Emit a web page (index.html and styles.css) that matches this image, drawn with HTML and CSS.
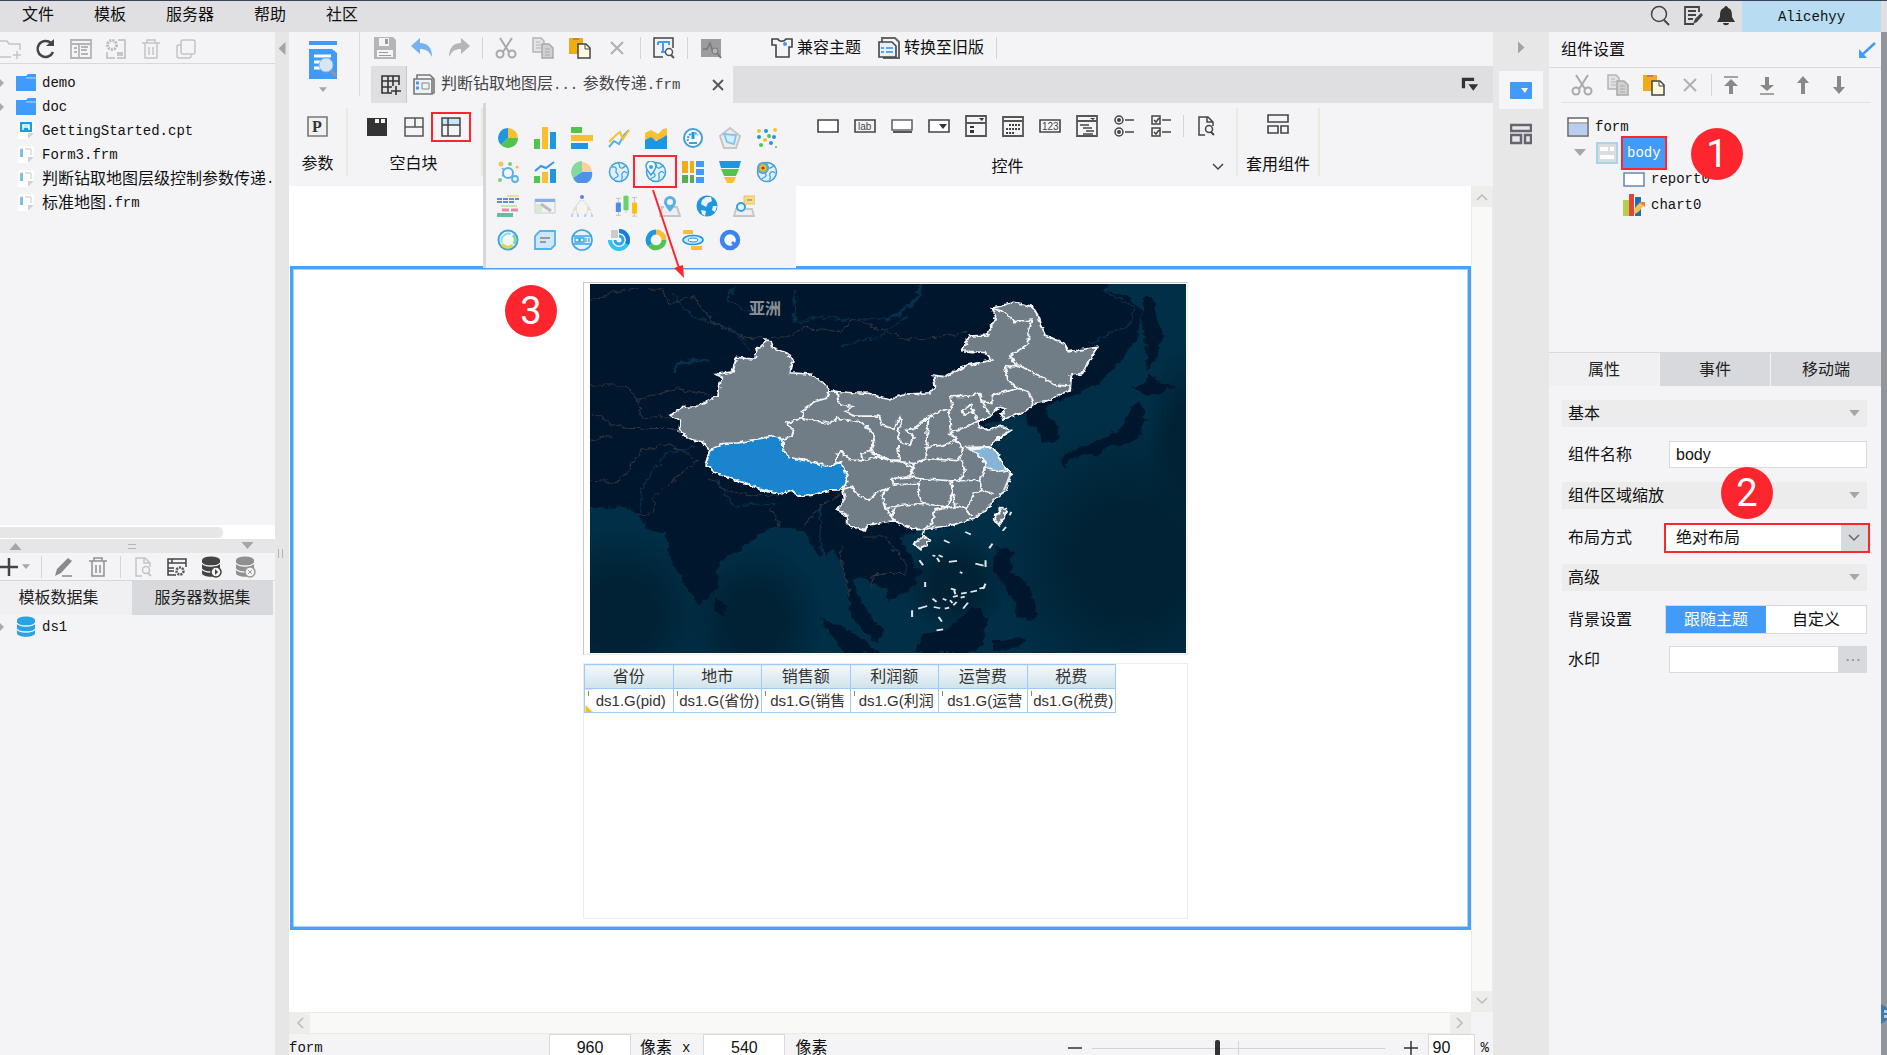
FILE: index.html
```html
<!DOCTYPE html>
<html lang="zh-CN">
<head>
    <meta charset="UTF-8">
    <title>判断钻取地图层级控制参数传递.frm</title>
    <link rel="stylesheet" href="styles.css">
</head>
<body>

<!-- shared icons -->
<svg class="defs" aria-hidden="true">
    <symbol id="i-cut" viewBox="0 0 22 22"><g fill="none" stroke="#a9a9a9" stroke-width="2"><path d="M5 1l9 14M17 1L8 15"/><circle cx="5" cy="17" r="3.500"/><circle cx="17" cy="17" r="3.500"/></g></symbol>
    <symbol id="i-copy" viewBox="0 0 22 22"><path d="M1 1h8l3 3v11H1z" fill="#e4e4e4" stroke="#b4b4b4" stroke-width="1.500"/><path d="M4 5h4M4 8h5M4 11h5" stroke="#b4b4b4"/><path d="M10 7h7l4 4v10H10z" fill="#d0d0d0" stroke="#a8a8a8" stroke-width="1.500"/><path d="M13 12h5M13 15h5M13 18h5" stroke="#aaa"/></symbol>
    <symbol id="i-paste" viewBox="0 0 22 22"><path d="M0 1h14v16H0z" fill="#f0ac14"/><path d="M4 0h6v3H4z" fill="#fff"/><path d="M4 1h6v2H4z" fill="#c9803a"/><path d="M9 7h8l4 4v10H9z" fill="#fff8e0" stroke="#444" stroke-width="1.500"/><path d="M16 7v5h5" fill="none" stroke="#444"/></symbol>
    <symbol id="i-del" viewBox="0 0 22 22"><path d="M5 5l12 12M17 5L5 17" stroke="#b0b0b0" stroke-width="2"/></symbol>
    <symbol id="i-trash" viewBox="0 0 22 22"><path d="M2 5h18M7 5V2h8v3M5 5v15h12V5M9 9v8M13 9v8" fill="none" stroke="currentColor" stroke-width="1.500"/></symbol>
    <symbol id="i-finddoc" viewBox="0 0 22 22"><path d="M10 20H4V2h9l5 5v4M12 2v5h6" fill="none" stroke="currentColor" stroke-width="1.500"/><circle cx="14" cy="14" r="3.500" fill="none" stroke="currentColor" stroke-width="1.500"/><path d="M16 17l3 3" stroke="currentColor" stroke-width="2"/></symbol>
    <symbol id="i-folder" viewBox="0 0 22 18"><path d="M1 2h10l2-2h8v17H1z" fill="#429bf9"/><path d="M11 4h10" stroke="#bcdcff"/></symbol>
    <symbol id="i-frm" viewBox="0 0 18 20"><path d="M1 1h16v11l-5 6H1z" fill="#fff"/><path d="M3 4h3v8H3z" fill="#7cc0ea"/><path d="M8 4h6M14 4v6M3 4h3" stroke="#c5c9d0" fill="none"/><path d="M11 18v-6h6z" fill="#d2d2d4"/></symbol>
    <symbol id="i-db" viewBox="0 0 22 22"><path d="M2 4v13c0 5 18 5 18 0V4z" fill="currentColor"/><ellipse cx="11" cy="4" rx="9" ry="3.500" fill="currentColor"/><path d="M2 7c2 4 16 4 18 0M2 13c2 4 16 4 18 0" stroke="#f4f4f7" stroke-width="1.300" fill="none"/></symbol>
    <symbol id="i-globe" viewBox="0 0 22 22"><circle cx="11" cy="11" r="9.500" fill="#dff0fb" stroke="#3d9fe0" stroke-width="1.500"/><path d="M4 6c4-1 5 2 4 4s3 3 2 5-3 1-4 3M10 2c3 2 0 4 3 5s3-3 6-2M19 12c-3-3-6 0-5 3s-1 3 0 4" fill="none" stroke="#3d9fe0" stroke-width="1.300"/></symbol>
    <symbol id="i-down" viewBox="0 0 12 8"><path d="M0 0h12L6 7z" fill="#a6a6a8"/></symbol>
    <symbol id="i-chev" viewBox="0 0 14 10"><path d="M2 2l5 5 5-5" fill="none" stroke="currentColor" stroke-width="1.500"/></symbol>
</svg>

<div class="app">
    <header class="menubar">
        <nav class="menus">
            <button>文件</button>
            <button>模板</button>
            <button>服务器</button>
            <button>帮助</button>
            <button>社区</button>
        </nav>
        <div class="menu-tools">
            <button aria-label="搜索"><svg viewBox="0 0 22 22"><circle cx="10" cy="9" r="7.500" fill="none" stroke="#444" stroke-width="1.500"/><path d="M15 15l5 5" stroke="#444" stroke-width="2"/></svg></button>
            <button aria-label="反馈"><svg viewBox="0 0 22 22"><path d="M17 7V2H3v17h9M6 6h8M6 10h8M6 14h5" fill="none" stroke="#444" stroke-width="1.800"/><path d="M11 19l2-5 6-6 2 2-6 7z" fill="#444"/></svg></button>
            <button aria-label="消息"><svg viewBox="0 0 22 22"><path d="M11 1c1 0 2 1 2 2 4 1 4 5 4 9l3 5H2l3-5c0-4 0-8 4-9 0-1 1-2 2-2zM8 18h6c0 3-6 3-6 0z" fill="#333"/></svg></button>
        </div>
        <button class="user">Alicehyy</button>
    </header>

    <div class="workspace">
        <aside class="left">
            <div class="toolbar files-bar">
                <button aria-label="新建文件夹"><svg viewBox="0 0 22 22"><path d="M0 3h7l2 3h11v6M0 19h11M17 13v8M13 17h8" fill="none" stroke="#c4c4c4" stroke-width="1.500"/></svg></button>
                <button aria-label="刷新"><svg viewBox="0 0 22 22"><path d="M18 14a8 8 0 1 1-2-9" fill="none" stroke="#444" stroke-width="2.500"/><path d="M11 8h8V1z" fill="#444"/></svg></button>
                <button aria-label="视图"><svg viewBox="0 0 22 22"><path d="M1 2h20v18H1zM1 6h20M9 6v14M4 10h3M4 14h3M11 9h7M11 12h6M11 16h7" fill="none" stroke="#b4b4b4" stroke-width="1.800"/></svg></button>
                <button aria-label="配置"><svg viewBox="0 0 22 22"><path d="M13 2h7v18h-8M2 14v6h8" fill="none" stroke="#bbb" stroke-width="1.500"/><circle cx="7" cy="7" r="4.500" fill="none" stroke="#bbb" stroke-width="3" stroke-dasharray="2 1"/><path d="M12 14h6v4h-6z" fill="#c6c6c6"/></svg></button>
                <button aria-label="删除" class="pale"><svg><use href="#i-trash"/></svg></button>
                <button aria-label="复制"><svg viewBox="0 0 22 22"><rect x="6" y="2" width="14" height="14" rx="2" fill="none" stroke="#c4c4c4" stroke-width="1.500"/><path d="M6 7H3q-1 0-1 1v10q0 2 2 2h10q2 0 2-2v-2" fill="none" stroke="#c4c4c4" stroke-width="1.500"/></svg></button>
            </div>
            <ul class="tree files">
                <li><i class="knob"></i><svg><use href="#i-folder"/></svg><span class="mono">demo</span></li>
                <li><i class="knob"></i><svg><use href="#i-folder"/></svg><span class="mono">doc</span></li>
                <li><i class="stub"></i><svg viewBox="0 0 18 20"><path d="M1 1h16v11l-5 6H1z" fill="#fff"/><path d="M3 1h12v10H3z" fill="#16a0e4"/><path d="M6 9V4h6v5M6 6h6" fill="none" stroke="#fff" stroke-width="1.500"/><path d="M11 18v-6h6z" fill="#d2d2d4"/></svg><span class="mono">GettingStarted.cpt</span></li>
                <li><i class="stub"></i><svg><use href="#i-frm"/></svg><span class="mono">Form3.frm</span></li>
                <li><i class="stub"></i><svg><use href="#i-frm"/></svg>判断钻取地图层级控制参数传递<span class="mono">.frm</span></li>
                <li><i class="stub"></i><svg><use href="#i-frm"/></svg>标准地图<span class="mono">.frm</span></li>
            </ul>
            <div class="hscroll-thin"><span></span></div>
            <div class="splitter-h"><svg class="flip"><use href="#i-down"/></svg><i></i><svg><use href="#i-down"/></svg></div>
            <div class="toolbar data-bar">
                <button class="add" aria-label="新增"><svg viewBox="0 0 22 22"><path d="M9 2v18M0 11h18" stroke="#444" stroke-width="2.500"/></svg><svg class="caret"><use href="#i-down"/></svg></button>
                <i class="sep"></i>
                <button aria-label="编辑"><svg viewBox="0 0 22 22"><path d="M2 20l2-7L15 2l4 3L8 17z" fill="#8a8a8a"/><path d="M9 20h10" stroke="#8a8a8a" stroke-width="1.500"/></svg></button>
                <button aria-label="删除" class="mid"><svg><use href="#i-trash"/></svg></button>
                <i class="sep"></i>
                <button aria-label="预览" class="pale"><svg><use href="#i-finddoc"/></svg></button>
                <button aria-label="存储过程"><svg viewBox="0 0 22 22"><path d="M10 19H2V3h18v8M2 7h18M6 3v4M2 12h6M2 15h6" fill="none" stroke="#444" stroke-width="1.500"/><circle cx="14" cy="15" r="3.500" fill="none" stroke="#555" stroke-width="2.500" stroke-dasharray="2 1"/></svg></button>
                <button aria-label="连接" class="dark"><svg viewBox="0 0 22 22"><use href="#i-db"/><circle cx="16" cy="16" r="5" fill="#f4f4f7" stroke="#444" stroke-width="1.500"/><path d="M15 13l3 3-3 3z" fill="#444"/></svg></button>
                <button aria-label="断开" class="mid"><svg viewBox="0 0 22 22"><use href="#i-db"/><circle cx="16" cy="16" r="5" fill="#f4f4f7" stroke="#999" stroke-width="1.500"/><path d="M14 14l4 4M18 14l-4 4" stroke="#999"/></svg></button>
            </div>
            <div class="tabs data-tabs" role="tablist">
                <button role="tab" aria-selected="true">模板数据集</button>
                <button role="tab" aria-selected="false">服务器数据集</button>
            </div>
            <ul class="tree datasets">
                <li><i class="knob"></i><svg><use href="#i-db"/></svg><span class="mono">ds1</span></li>
            </ul>
        </aside>

        <div class="splitter-v"><i class="tri-left"></i><i class="grip"></i></div>

        <main class="center">
            <div class="top">
                <button class="preview" aria-label="预览">
                    <svg class="preview-icon" viewBox="0 0 30 40"><path d="M1 1h28v4H1zM1 9h23l5 4v26H1z" fill="#3f9af8"/><path d="M6 16h17M6 22h7M6 28h6" stroke="#fff" stroke-width="3"/><circle cx="18" cy="25" r="7" fill="#d7e6f4" stroke="#8fb9e6"/><path d="M23 31l5 5" stroke="#8a97a6" stroke-width="3"/></svg>
                    <svg class="caret"><use href="#i-down"/></svg>
                </button>
                <div class="top-main">
                    <div class="toolbar main-bar">
                        <button aria-label="保存"><svg viewBox="0 0 22 22"><path d="M0 0h19l3 3v19H0z" fill="#b5b5b7"/><path d="M5 1h10v8H5zM3 13h16v7H3z" fill="#f4f4f7"/><path d="M11 2h3v5h-3zM5 15h9v1H5zM5 18h12v1H5z" fill="#9a9a9c"/></svg></button>
                        <button aria-label="撤销"><svg viewBox="0 0 22 22"><path d="M9 1v5c8 0 12 5 12 14-3-6-6-8-12-8v5L0 9z" fill="#74b2f2"/></svg></button>
                        <button aria-label="重做"><svg viewBox="0 0 22 22"><path d="M13 1v5C5 6 1 11 1 20c3-6 6-8 12-8v5l9-8z" fill="#b5b5b7"/></svg></button>
                        <i class="sep"></i>
                        <button aria-label="剪切"><svg><use href="#i-cut"/></svg></button>
                        <button aria-label="复制"><svg><use href="#i-copy"/></svg></button>
                        <button aria-label="粘贴"><svg><use href="#i-paste"/></svg></button>
                        <button aria-label="删除"><svg><use href="#i-del"/></svg></button>
                        <i class="sep"></i>
                        <button aria-label="查找"><svg viewBox="0 0 22 22"><path d="M10 20H1V1h19v10" fill="none" stroke="#444" stroke-width="1.500"/><path d="M5 5h11v3M5 5v3M10 5v10M8 15h4" stroke="#429bf9" stroke-width="2" fill="none"/><circle cx="16" cy="15" r="3.500" fill="#fff" stroke="#555" stroke-width="1.500"/><path d="M18 18l3 3" stroke="#555" stroke-width="2"/></svg></button>
                        <i class="sep"></i>
                        <button aria-label="性能"><svg viewBox="0 0 22 22"><path d="M1 2h20v18H1z" fill="#9c9c9e"/><path d="M3 12h4l3-6 3 9" fill="none" stroke="#777" stroke-width="1.500"/><circle cx="15" cy="14" r="3" fill="#b4b4b4" stroke="#777"/><path d="M17 16l4 5" stroke="#777" stroke-width="2"/></svg></button>
                        <button class="text-btn theme"><svg viewBox="0 0 22 22"><path d="M1 2h6c1 3 6 3 8 0h6v8h-3v10H5V8H1z" fill="none" stroke="#444" stroke-width="1.600"/><circle cx="14" cy="7" r="2" fill="#429bf9"/></svg>兼容主题</button>
                        <button class="text-btn"><svg viewBox="0 0 22 22"><path d="M4 5V1h13l4 4v16H5" fill="none" stroke="#666" stroke-width="2"/><path d="M1 5h13l4 4v11H1z" fill="#e8f1fb" stroke="#444" stroke-width="1.600"/><path d="M3 11h3M8 11h7M3 15h3M8 15h7" stroke="#5aa8f5" stroke-width="2"/></svg>转换至旧版</button>
                        <i class="sep"></i>
                    </div>
                    <div class="doc-tabs">
                        <button class="new-tab" aria-label="新建"><svg viewBox="0 0 22 22"><path d="M12 19H2V2h17v9M2 7h17M2 13h10M8 2v17M13 2v10M11 17h10M16 12v9" fill="none" stroke="#333" stroke-width="1.600"/></svg></button>
                        <div class="doc-tab">
                            <svg viewBox="0 0 22 22"><path d="M4 5V1h13l4 4v14H19" fill="none" stroke="#777" stroke-width="1.600"/><path d="M1 5h18v15H1z" fill="#eef1f5" stroke="#777" stroke-width="1.600"/><path d="M3 9h3M3 14h3" stroke="#429bf9" stroke-width="3"/><path d="M9 9h7v6H9z" fill="none" stroke="#888"/></svg>
                            <span>判断钻取地图层<span class="mono">...</span> 参数传递<span class="mono">.frm</span></span>
                            <button class="close" aria-label="关闭"><svg viewBox="0 0 22 22"><path d="M6 6l10 10M16 6L6 16" stroke="#555" stroke-width="1.800"/></svg></button>
                        </div>
                        <button class="tab-list" aria-label="标签列表"><svg viewBox="0 0 22 22"><path d="M3 15V4h11v2" fill="none" stroke="#333" stroke-width="4"/><path d="M9 10h12l-6 8z" fill="#333"/></svg></button>
                    </div>
                </div>
            </div>

            <div class="ribbon">
                <div class="group params">
                    <div class="icons"><button aria-label="参数"><svg viewBox="0 0 22 22"><path d="M1 1h19v19H1z" fill="#f1f1f1" stroke="#777" stroke-width="1.600"/><text x="5" y="16" class="p-glyph">P</text></svg></button></div>
                    <span>参数</span>
                </div>
                <div class="group blocks">
                    <div class="icons">
                        <button aria-label="tab块"><svg viewBox="0 0 22 22"><path d="M1 2h20v18H1z" fill="#333"/><path d="M9 3h4v4H9zM15 3h4v4h-4z" fill="#f4f4f7"/></svg></button>
                        <button aria-label="绝对画布块"><svg viewBox="0 0 22 22"><path d="M2 2h18v18H2zM2 11h18M12 2v9" fill="none" stroke="#555" stroke-width="1.500"/></svg></button>
                        <button aria-label="报表块" class="marked"><svg viewBox="0 0 22 22"><path d="M2 2h18v7H2z" fill="#c3e8fa"/><path d="M2 2h18v18H2zM2 9h18M8 2v18" fill="none" stroke="#444" stroke-width="1.500"/></svg></button>
                    </div>
                    <span>空白块</span>
                </div>
                <div class="chart-slot">
                    <div class="chart-menu">
                        <div class="chart-row">
                            <button aria-label="饼图"><svg viewBox="0 0 22 22"><path d="M11 11V1A10 10 0 0 1 21 11z" fill="#f9bf34"/><path d="M11 11V1A10 10 0 0 0 4 18z" fill="#2196e0"/><path d="M11 11h10A10 10 0 0 1 4 18z" fill="#52c44e"/></svg></button>
                            <button aria-label="柱形图"><svg viewBox="0 0 22 22"><path d="M0 12h6v10H0z" fill="#52c44e"/><path d="M8 0h6v22H8z" fill="#f9bf34"/><path d="M16 5h6v17h-6z" fill="#2196e0"/></svg></button>
                            <button aria-label="条形图"><svg viewBox="0 0 22 22"><path d="M0 0h11v6H0z" fill="#52c44e"/><path d="M0 8h22v6H0z" fill="#f9bf34"/><path d="M0 16h17v6H0z" fill="#2196e0"/></svg></button>
                            <button aria-label="折线图"><svg viewBox="0 0 22 22"><path d="M1 20l5-6 5 3 5-9 5-5" fill="none" stroke="#58b0ea" stroke-width="2"/><path d="M1 15l7-7 4-3 3 7 6-9" fill="none" stroke="#f9bf34" stroke-width="2"/></svg></button>
                            <button aria-label="面积图"><svg viewBox="0 0 22 22"><path d="M0 6l6-3 7 4 5-5 4-1v12H0z" fill="#f9bf34"/><path d="M0 13l6-3 5 4 6-3 5-3v14H0z" fill="#2196e0"/></svg></button>
                            <button aria-label="仪表盘"><svg viewBox="0 0 22 22"><circle cx="11" cy="11" r="9" fill="#fff" stroke="#3d9fe0" stroke-width="2"/><path d="M6 14a6 6 0 0 1 10-6" fill="none" stroke="#3d9fe0" stroke-width="2" stroke-dasharray="2 1"/><path d="M11 12V5" stroke="#2196e0" stroke-width="3"/><path d="M7 16h8" stroke="#3d9fe0" stroke-width="2"/></svg></button>
                            <button aria-label="雷达图"><svg viewBox="0 0 22 22"><path d="M11 1l10 8-4 12H5L1 9z" fill="#ededee" stroke="#c6c6c6" stroke-width="2"/><path d="M5 7l12 1-2 9-7-2z" fill="#d5ecfb" stroke="#7cc4f0" stroke-width="1.800"/></svg></button>
                            <button aria-label="散点图"><svg viewBox="0 0 22 22"><g fill="#2196e0"><circle cx="10" cy="4" r="2"/><circle cx="3" cy="10" r="2"/><circle cx="18" cy="10" r="2"/><circle cx="15" cy="16" r="2"/></g><g fill="#f9bf34"><circle cx="3" cy="4" r="2"/><circle cx="19" cy="3" r="2"/><circle cx="9" cy="13" r="2"/></g><g fill="#52c44e"><circle cx="13" cy="9" r="2"/><circle cx="5" cy="18" r="2"/><circle cx="20" cy="20" r="1"/></g></svg></button>
                        </div>
                        <div class="chart-row">
                            <button aria-label="气泡图"><svg viewBox="0 0 22 22"><circle cx="11" cy="12" r="5" fill="none" stroke="#58b0ea" stroke-width="2"/><circle cx="18" cy="18" r="3" fill="none" stroke="#58b0ea" stroke-width="1.800"/><circle cx="4" cy="3" r="2.500" fill="#f0c860"/><circle cx="13" cy="3" r="2" fill="#78d070"/><circle cx="20" cy="6" r="1.500" fill="#f9bf34"/><circle cx="3" cy="19" r="2" fill="#78d070"/><path d="M5 7l2 2M5 15l2-1" stroke="#58b0ea" stroke-width="1.500"/></svg></button>
                            <button aria-label="组合图"><svg viewBox="0 0 22 22"><path d="M0 15h6v7H0z" fill="#52c44e"/><path d="M8 11h6v11H8z" fill="#f9bf34"/><path d="M16 8h6v14h-6z" fill="#2196e0"/><path d="M1 10l6-5 5 2 8-6" fill="none" stroke="#2f9ce2" stroke-width="2"/></svg></button>
                            <button aria-label="玫瑰图"><svg viewBox="0 0 22 22"><path d="M11 11V1A10 10 0 0 1 21 11z" fill="#fbcf98"/><path d="M11 11V0A11 11 0 0 0 2 17z" fill="#86d8a0"/><path d="M11 11h10A10 10 0 0 1 2 17z" fill="#4f93e8"/></svg></button>
                            <button aria-label="地图"><svg><use href="#i-globe"/></svg></button>
                            <button aria-label="钻取地图" class="marked wide-mark"><svg viewBox="0 0 22 22"><use href="#i-globe"/><path d="M6 14C2 9 1 7 1 5a5 5 0 0 1 10 0c0 2-1 4-5 9z" fill="#eef7fd" stroke="#3d9fe0" stroke-width="1.500"/><circle cx="6" cy="6" r="2" fill="#3d9fe0"/></svg></button>
                            <button aria-label="矩形树图"><svg viewBox="0 0 22 22"><path d="M0 0h6v12H0zM8 0h4v12H8z" fill="#f0ac14"/><path d="M0 14h6v8H0zM8 14h4v8H8z" fill="#56ad56"/><path d="M14 0h8v6h-8zM14 8h8v6h-8zM14 16h8v6h-8z" fill="#429bf9"/></svg></button>
                            <button aria-label="漏斗图"><svg viewBox="0 0 22 22"><path d="M0 0h22l-2 7H2z" fill="#2196e0"/><path d="M2 8h18l-3 7H5z" fill="#52c44e"/><path d="M5 16h12l-3 6H8z" fill="#f9bf34"/></svg></button>
                            <button aria-label="热力地图"><svg viewBox="0 0 22 22"><use href="#i-globe"/><circle cx="7" cy="7" r="6" fill="#6f8df0"/><circle cx="7" cy="7" r="4.500" fill="#62d45a"/><circle cx="7" cy="7" r="3" fill="#f9bf34"/><circle cx="7" cy="7" r="1.600" fill="#e11"/></svg></button>
                        </div>
                        <div class="chart-row">
                            <button aria-label="甘特图"><svg viewBox="0 0 22 22"><path d="M0 4h22M0 7h18" stroke="#5a8ee0" stroke-width="2" stroke-dasharray="5 1"/><path d="M10 1h12" stroke="#f7d7a0" stroke-width="2"/><path d="M4 11h16" stroke="#bfe6b8" stroke-width="2"/><path d="M5 15h17" stroke="#e58aa8" stroke-width="3" stroke-dasharray="7 2"/><path d="M0 20h16" stroke="#5ec0a4" stroke-width="4"/></svg></button>
                            <button aria-label="框架图"><svg viewBox="0 0 22 22"><path d="M1 4h20v14H1z" fill="#f3f3f3" stroke="#ccc"/><path d="M1 4h20v3H1z" fill="#88aee8"/><path d="M2 9h6v8H2z" fill="#d5ecd0"/><path d="M7 9l10 7" stroke="#bbb" stroke-width="3"/></svg></button>
                            <button aria-label="组织图"><svg viewBox="0 0 22 22"><circle cx="11" cy="2" r="2" fill="#5a80e8"/><path d="M10 5L4 12M12 5l6 7M3 14l-2 7M5 14l2 7M17 14l-2 7M19 14l2 7" stroke="#d5dbe2" stroke-width="1.500" stroke-dasharray="2 1"/><path d="M3 12h3v3H3zM16 12h3v3h-3z" fill="#f5d9a8"/><path d="M0 19h2v3H0zM6 19h2v3H6zM13 19h2v3h-2zM20 19h2v3h-2z" fill="#b5d4f2"/></svg></button>
                            <button aria-label="箱形图" class="wide"><svg viewBox="0 0 26 26"><path d="M4 4v20M1 4h6M1 24h6M13 0v21M23 3v22M20 25h6M20 3h6" stroke="#bbb"/><path d="M1 9h6v11H1z" fill="#4a8ce8"/><path d="M10 1h6v17h-6z" fill="#68d468"/><path d="M20 9h6v13h-6z" fill="#fcbf10"/></svg></button>
                            <button aria-label="点地图"><svg viewBox="0 0 22 22"><path d="M5 12H3l-2 9h20l-3-9h-3" fill="#eee" stroke="#c6c6c6" stroke-width="2"/><path d="M11 17C6 11 5 9 5 7a6 6 0 0 1 12 0c0 2-1 4-6 10z" fill="#58b0ea"/><circle cx="11" cy="7" r="3" fill="#f4f4f7"/></svg></button>
                            <button aria-label="流向地图"><svg viewBox="0 0 22 22"><circle cx="11" cy="11" r="10.500" fill="#2196e0"/><path d="M10 2l5 0 1 4-4 2-2 4-5-3 1-4zM17 11l4 0-2 6-3-2zM5 15l5 1-1 5-3-2z" fill="#eaf5fd"/></svg></button>
                            <button aria-label="定位地图"><svg viewBox="0 0 22 22"><path d="M5 14H3l-2 7h20l-2-7h-6" fill="#eee" stroke="#c6c6c6" stroke-width="1.800"/><path d="M11 1h11v8h-8l-3 3z" fill="#f9dc90" stroke="#f0c050"/><path d="M14 5h5" stroke="#777"/><circle cx="8" cy="12" r="4" fill="#e3f2fc" stroke="#3d9fe0" stroke-width="2"/></svg></button>
                        </div>
                        <div class="chart-row">
                            <button aria-label="KPI"><svg viewBox="0 0 22 22"><circle cx="11" cy="11" r="9.500" fill="#eef9fb" stroke="#3da5e4" stroke-width="2"/><path d="M16 6a7 7 0 0 1 1 9" stroke="#7edb9c" stroke-width="3" fill="none"/><path d="M5 15c3 4 8 4 11 1" stroke="#e8d24a" stroke-width="3" fill="none"/><path d="M5 14a7 7 0 0 1 9-9" stroke="#8fdcf0" stroke-width="2" fill="none"/></svg></button>
                            <button aria-label="词条"><svg viewBox="0 0 22 22"><path d="M6 2h15v14l-4 4H1V7z" fill="#cfe8f9" stroke="#58b0ea" stroke-width="1.800"/><path d="M6 9h10M6 13h6" stroke="#999" stroke-width="2"/></svg></button>
                            <button aria-label="数字"><svg viewBox="0 0 22 22"><circle cx="11" cy="11" r="10" fill="#e3f2fc" stroke="#3da5e4" stroke-width="1.600"/><path d="M1 7h20M1 15h20M4 9h4v4H4zM9 9h4v4H9zM15 9v4M18 9v4" stroke="#3da5e4" fill="none" stroke-width="1.300"/></svg></button>
                            <button aria-label="环形进度"><svg viewBox="0 0 22 22"><path d="M11 2a9 9 0 1 1-9 9" fill="none" stroke="#2fc4f4" stroke-width="4"/><path d="M11 2a9 9 0 0 1 8 13" fill="none" stroke="#1c79dc" stroke-width="4"/><path d="M11 7a4 4 0 1 1-4 4" fill="none" stroke="#2fa4e8" stroke-width="3"/><path d="M3 1h7v8H3z" fill="#ccc"/></svg></button>
                            <button aria-label="多层饼图"><svg viewBox="0 0 22 22"><g fill="none" stroke-width="5"><path d="M11 3a8 8 0 0 1 8 8" stroke="#f9bf34"/><path d="M19 11a8 8 0 0 1-14 5" stroke="#52c44e"/><path d="M5 16a8 8 0 0 1 6-13" stroke="#2196e0"/></g></svg></button>
                            <button aria-label="轮播"><svg viewBox="0 0 22 22"><path d="M1 1h10v4H1zM9 17h11v4H9z" fill="#f9bf34"/><ellipse cx="11" cy="11" rx="10" ry="4.500" fill="#cfe8f9" stroke="#2196e0" stroke-width="1.600"/><ellipse cx="11" cy="11" rx="5" ry="2" fill="#fff" stroke="#2196e0"/></svg></button>
                            <button aria-label="圆环"><svg viewBox="0 0 22 22"><circle cx="11" cy="11" r="8" fill="#fff" stroke="#3b82f4" stroke-width="4.500"/><path d="M13 13l3 3" stroke="#3b82f4" stroke-width="3"/></svg></button>
                        </div>
                    </div>
                    <svg class="arrow" viewBox="0 0 44 100"><path d="M6 6L32 84" stroke="#fd262e" stroke-width="2"/><path d="M27 84l9-3 1 13z" fill="#fd262e"/></svg>
                </div>
                <div class="group widgets">
                    <div class="icons">
                        <button aria-label="文本框"><svg viewBox="0 0 22 22"><path d="M1 5h20v12H1z" fill="#fff" stroke="#444" stroke-width="1.600"/></svg></button>
                        <button aria-label="标签"><svg viewBox="0 0 22 22"><path d="M1 5h20v12H1z" fill="none" stroke="#444" stroke-width="1.600"/><text x="4" y="15" class="tiny">lab</text></svg></button>
                        <button aria-label="按钮"><svg viewBox="0 0 22 22"><path d="M1 5h20v10H1z" fill="#fff" stroke="#666" stroke-width="1.600"/><path d="M2 17h19" stroke="#555" stroke-width="2"/></svg></button>
                        <button aria-label="下拉框"><svg viewBox="0 0 22 22"><path d="M1 5h20v12H1z" fill="#fff" stroke="#444" stroke-width="1.600"/><path d="M11 9h8l-4 5z" fill="#333"/></svg></button>
                        <button aria-label="下拉复选框"><svg viewBox="0 0 22 22"><path d="M1 1h20v20H1zM1 8h20" fill="none" stroke="#555" stroke-width="1.800"/><path d="M14 3h5l-2 3zM5 11h4v2H5zM5 15h4v3H5z" fill="#333"/></svg></button>
                        <button aria-label="日期"><svg viewBox="0 0 22 22"><path d="M1 2h20v19H1zM1 6h20" fill="none" stroke="#555" stroke-width="1.800"/><path d="M7 10h11M4 14h14M4 18h9" stroke="#444" stroke-width="2" stroke-dasharray="2 1"/></svg></button>
                        <button aria-label="数字"><svg viewBox="0 0 22 22"><path d="M1 5h20v12H1z" fill="none" stroke="#444" stroke-width="1.600"/><text x="3" y="15" class="tiny">123</text></svg></button>
                        <button aria-label="下拉树"><svg viewBox="0 0 22 22"><path d="M1 1h20v20H1zM1 6h20" fill="none" stroke="#555" stroke-width="1.800"/><path d="M14 3h5l-2 2z" fill="#333"/><path d="M4 10h9M7 13h9M10 16h8M7 19h10" stroke="#444" stroke-width="1.600"/></svg></button>
                        <button aria-label="单选按钮组"><svg viewBox="0 0 22 22"><g fill="none" stroke="#444" stroke-width="1.500"><circle cx="6" cy="5" r="4"/><circle cx="6" cy="17" r="4"/><path d="M12 5h9M12 17h9"/></g><circle cx="6" cy="5" r="2" fill="#444"/><circle cx="6" cy="17" r="2" fill="#444"/></svg></button>
                        <button aria-label="复选按钮组"><svg viewBox="0 0 22 22"><path d="M2 1h8v8H2zM2 13h8v8H2zM12 5h9M12 17h9M4 5l2 2 3-4M4 17l2 2 3-4" fill="none" stroke="#444" stroke-width="1.500"/></svg></button>
                        <i class="sep"></i>
                        <button aria-label="查询" class="dark"><svg><use href="#i-finddoc"/></svg></button>
                    </div>
                    <div class="group-foot"><span>控件</span><button aria-label="更多" class="dark"><svg class="chev"><use href="#i-chev"/></svg></button></div>
                </div>
                <div class="group suite">
                    <div class="icons"><button aria-label="套用组件"><svg viewBox="0 0 22 22"><path d="M1 2h20v7H1zM1 13h10v7H1zM14 13h7v7h-7z" fill="none" stroke="#444" stroke-width="1.600"/></svg></button></div>
                    <span>套用组件</span>
                </div>
            </div>

            <div class="canvas">
                <div class="stage">
                    <div class="form-body">
                        <span class="badge badge-3">3</span>
                        <div class="chart-box">
                            <span class="map-label">亚洲</span>
                            <svg viewBox="76 72 1460 1106" preserveAspectRatio="none" role="img" aria-label="中国地图">
                                <defs>
                                    <filter id="coast" x="0" y="0" width="100%" height="100%" color-interpolation-filters="sRGB"><feTurbulence type="fractalNoise" baseFrequency="0.050" numOctaves="3" seed="4"/><feDisplacementMap in="SourceGraphic" scale="22" xChannelSelector="R" yChannelSelector="G"/></filter>
                                    <filter id="border" color-interpolation-filters="sRGB"><feTurbulence type="fractalNoise" baseFrequency="0.080" numOctaves="2" seed="7"/><feDisplacementMap in="SourceGraphic" scale="14" xChannelSelector="R" yChannelSelector="G"/></filter>
                                    <radialGradient id="deep"><stop offset="0" stop-color="#012234"/><stop offset="0.400" stop-color="#012234"/><stop offset="1" stop-color="#012234" stop-opacity="0"/></radialGradient>
                                </defs>
                                <rect x="76" y="72" width="1460" height="1106" fill="#002f47"/>
                                <ellipse cx="1400" cy="900" rx="330" ry="420" fill="url(#deep)"/>
                                <ellipse cx="1540" cy="560" rx="110" ry="300" fill="url(#deep)"/>
                                <ellipse cx="480" cy="1080" rx="170" ry="230" fill="url(#deep)"/>
                                <ellipse cx="150" cy="1060" rx="210" ry="260" fill="url(#deep)"/>
                                <ellipse cx="970" cy="970" rx="130" ry="160" fill="url(#deep)"/>
                                <g fill="#00162d" filter="url(#coast)">
                                    <path d="M60 50H1370L1330 92 1392 108 1425 150 1418 230 1380 300 1330 365 1275 400 1200 432 1190 450 1222 500 1220 545 1185 548 1175 510 1150 490 1145 460 1090 480 1030 495 1100 520 1055 560 1105 640 1060 730 960 800 880 812 835 830 860 885 885 935 870 975 810 1022 800 985 768 970 735 945 722 962 735 1010 760 1060 790 1105 782 1150 745 1110 705 1050 712 1000 695 910 670 870 640 895 600 810 530 800 490 825 440 870 392 905 385 990 342 1035 315 985 270 890 262 815 225 815 175 742H60Z"/>
                                    <path d="M1435 105L1455 115 1480 235 1460 300 1440 330 1437 240 1425 170Z"/>
                                    <path d="M1450 340L1475 368 1512 380 1445 410 1402 385 1430 370Z"/>
                                    <path d="M1425 430L1440 480 1410 545 1345 560 1320 590 1290 578 1250 600 1238 630 1225 595 1270 562 1345 530 1385 495 1400 440Z"/>
                                    <path d="M385 1010L415 1040 405 1068 380 1050Z"/>
                                    <path d="M1072 860L1110 870 1105 940 1150 970 1175 1060 1150 1080 1100 1000 1065 930Z"/>
                                    <path d="M1120 1010L1170 1040 1165 1080 1120 1070Z"/>
                                    <path d="M640 1075L700 1100 790 1178H700Z"/>
                                    <path d="M870 1178L890 1120 950 1110 1010 1040 1050 1070 1040 1150 1010 1178Z"/>
                                    <path d="M1060 1140L1150 1135 1120 1160 1070 1178Z"/>
                                </g>
                                <g class="rivers" filter="url(#coast)">
                                    <path d="M275 100L330 170 430 210 470 270M430 72L410 120 480 160M575 90L580 190 640 170 700 180 850 170 780 230 690 260"/>
                                    <path d="M370 300L300 305 280 335" class="lake"/>
                                    <path d="M885 75Q890 130 800 180" class="lake"/>
                                    <path d="M1330 90L1410 140 1405 190 1300 250M330 560L260 580 200 690 200 760M385 660L430 740 530 730M640 740V850L650 900"/>
                                </g>
                                <g class="foreign" filter="url(#coast)">
                                    <path d="M76 120L170 85 250 85 270 130 330 110 380 190 460 235 560 230 600 200 690 215 720 175 790 210 850 240 940 230 1005 215"/>
                                    <path d="M76 375H160L195 420 290 385 370 405M195 420L200 470 290 470M76 460L160 505 290 505M76 660L150 665 200 570 270 550 330 590M190 765L230 760 230 710 300 640 340 600M370 650L400 690 500 710 550 705M520 740L540 800M600 800L640 740 690 700M690 860L700 950 715 1010M750 830L800 830 850 910 850 940 770 940 765 990M76 540L130 530"/>
                                </g>
                                <g filter="url(#border)" class="provinces">
                                    <path class="land" d="M275 465L300 442 335 440 390 405 398 350 383 343 425 335 435 292 480 297 485 263 500 258 505 240 518 242 525 262 560 280 573 300 567 338 615 342 650 370 662 392 720 398 760 400 808 420 850 402 910 398 922 378 917 345 945 350 1000 315 1062 300 1045 278 988 272 1005 228 1050 225 1070 170 1062 145 1115 126 1160 140 1175 170 1190 225 1240 250 1248 275 1317 262 1300 300 1282 340 1255 345 1252 390 1215 410 1190 425 1165 430 1140 455 1090 477 1085 465 1095 445 1078 442 1055 470 1028 482 1030 498 1050 510 1080 498 1108 510 1075 535 1055 560 1075 580 1085 610 1100 630 1108 645 1095 690 1065 720 1050 745 1015 775 960 795 905 805 880 808 850 800 825 782 810 783 755 795 750 812 720 800 705 790 705 765 682 750 700 715 695 688 660 690 620 705 590 708 570 690 540 702 500 690 460 670 420 655 380 635 360 610 370 570 355 548 318 535 295 510 297 483Z"/>
                                    <path class="tibet" d="M370 570L400 550 440 548 480 538 525 528 548 538 550 575 565 592 610 602 660 620 690 605 700 630 707 665 692 688 660 690 620 705 590 708 570 690 540 702 500 690 460 670 420 655 380 635 360 610Z"/>
                                    <path class="jiangsu" d="M1005 566L1055 560 1075 580 1085 610 1100 630 1075 634 1045 620 1040 598Z"/>
                                    <path class="lines" d="M662 392L655 415 625 425 600 450 595 475 557 488 575 512 570 530 548 538M595 475L640 485 665 490 680 475 735 485 765 510 773 545 758 575 740 580 745 602 715 600 690 575 682 580 680 605M680 392L685 430 720 440 700 455 725 468 785 468 790 495 820 505 835 470 840 490 830 515 835 545 860 555 870 530 850 510 875 500 905 470 940 450 965 445 958 410 1005 408 1030 398 1035 425 1060 430 1060 405 1125 385 1100 360 1092 320 1125 320 1105 290 1150 250 1150 215 1160 180 1115 185 1090 155 1062 145M1092 320L1125 315 1190 355 1215 375 1250 378M1125 385L1150 395 1160 430M905 470L900 560 940 555 975 540 960 520 955 450M955 520L1000 500 1028 482M975 540L985 562 1055 560M988 450L1010 435 1015 455 995 465 985 450M1015 455L1025 480M1035 425L1060 470M773 545L765 575 810 600 835 600 830 555M810 600L870 610 900 595 980 602 990 565M900 560L900 595M870 610L860 650 885 655 960 662 1030 660 1045 620M860 650L815 655 820 675 880 670 880 700 890 730 840 735 800 745 790 705 805 685 780 695 760 720 740 710 715 680 695 688M880 670L885 655M985 600L995 625 985 660M960 662L965 695 950 740 890 730M965 695L970 740 1000 745 1015 700 1035 690 1030 660M950 740L920 750 915 790 895 805M920 750L970 740M1035 690L1065 700M820 745L815 785M830 600L870 625 860 650M745 602L780 590 810 600M995 745L1010 770M800 745L825 782"/>
                                    <path class="land" d="M1085 742L1096 745 1090 775 1077 796 1065 775Z"/>
                                    <path class="land" d="M868 848L895 828 908 838 900 855 884 866Z"/>
                                    <path d="M895 805L890 830" class="lines"/>
                                </g>
                                <path class="islands" d="M1105 645L1090 690M1108 755l-4 10M1095 800l-8 12M1062 850l-8 14M1045 900v20M883 900l9 15M897 965v15M1045 970l-6 16M865 1050v20M995 815l14 8M943 840l14 8M915 885l7 3M930 885l10 5M926 893l6 12M955 905l20-3M1020 910l20 6M960 985l12 4M968 990l3 12M915 1015l10 10M880 1045l22-8M930 1070l8 14M925 1110l16-3M985 1000l14-3M1008 995l16-4M940 1015l9 5M958 1020l6 8M965 1010l12-4M984 1012l10-3M945 1045l11-3M966 1035l8-10M990 1045l12-18M918 1040l16 4M1030 985l14-4M982 935l6 4"/>
                            </svg>
                        </div>
                        <div class="report-box">
                            <table>
                                <thead>
                                    <tr><th>省份</th><th>地市</th><th>销售额</th><th>利润额</th><th>运营费</th><th>税费</th></tr>
                                </thead>
                                <tbody>
                                    <tr><td class="flag">ds1.G(pid)</td><td>ds1.G(省份)</td><td>ds1.G(销售</td><td>ds1.G(利润</td><td>ds1.G(运营</td><td>ds1.G(税费)</td></tr>
                                </tbody>
                            </table>
                        </div>
                    </div>
                </div>
                <div class="vscroll"><svg class="chev flip"><use href="#i-chev"/></svg><svg class="chev"><use href="#i-chev"/></svg></div>
                <div class="hscroll"><svg class="chev turn-l"><use href="#i-chev"/></svg><svg class="chev turn-r"><use href="#i-chev"/></svg></div>
            </div>

            <footer class="status">
                <span class="mono form-name">form</span>
                <input class="size-w" value="960" aria-label="宽度">
                <span>像素</span>
                <span class="mono">x</span>
                <input class="size-h" value="540" aria-label="高度">
                <span>像素</span>
                <div class="zoom">
                    <button aria-label="缩小"><svg viewBox="0 0 22 22"><path d="M4 11h14" stroke="#333" stroke-width="1.500"/></svg></button>
                    <input type="range" min="0" max="100" value="43" aria-label="缩放">
                    <button aria-label="放大"><svg viewBox="0 0 22 22"><path d="M4 11h14M11 4v14" stroke="#333" stroke-width="1.500"/></svg></button>
                    <input class="percent" value="90" aria-label="缩放比例">
                    <span class="mono">%</span>
                </div>
            </footer>
        </main>

        <div class="side-strip">
            <i class="tri-right"></i>
            <button class="on" aria-label="组件设置"><svg viewBox="0 0 22 22"><rect y="3" width="22" height="17" rx="1" fill="#429bf9"/><path d="M11 9h7l-3 5z" fill="#fff"/></svg></button>
            <button aria-label="组件库"><svg viewBox="0 0 22 22"><path d="M1 2h20v6H1zM1 12h10v8H1zM15 12h6v8h-6z" fill="none" stroke="#656570" stroke-width="2.500"/></svg></button>
        </div>

        <aside class="right">
            <span class="badge badge-1">1</span>
            <span class="badge badge-2">2</span>
            <div class="panel-title"><h2>组件设置</h2><button aria-label="收起"><svg viewBox="0 0 22 22"><path d="M19 4L7 15" stroke="#429bf9" stroke-width="2.500"/><path d="M3 10l8 9H3z" fill="#429bf9"/></svg></button></div>
            <div class="toolbar comp-bar">
                <button aria-label="剪切"><svg><use href="#i-cut"/></svg></button>
                <button aria-label="复制"><svg><use href="#i-copy"/></svg></button>
                <button aria-label="粘贴"><svg><use href="#i-paste"/></svg></button>
                <button aria-label="删除"><svg><use href="#i-del"/></svg></button>
                <i class="sep"></i>
                <button aria-label="置于顶层"><svg viewBox="0 0 22 22"><path d="M4 3h14" stroke="#888" stroke-width="1.500"/><path d="M11 5l7 7h-5v8H9v-8H4z" fill="#888"/></svg></button>
                <button aria-label="置于底层"><svg viewBox="0 0 22 22"><path d="M4 20h14" stroke="#888" stroke-width="1.500"/><path d="M11 17l7-6h-5V3H9v8H4z" fill="#888"/></svg></button>
                <button aria-label="上移"><svg viewBox="0 0 22 22"><path d="M11 2l6 7h-4v11H9V9H5z" fill="#888"/></svg></button>
                <button aria-label="下移"><svg viewBox="0 0 22 22"><path d="M11 20l6-7h-4V2H9v11H5z" fill="#888"/></svg></button>
            </div>
            <ul class="tree components">
                <li class="lv0"><svg viewBox="0 0 22 20"><path d="M1 1h20v18H1z" fill="#fff" stroke="#666" stroke-width="1.500"/><path d="M2 7h18v11H2z" fill="#b7cef0"/><path d="M1 6h20" stroke="#666"/></svg><span class="mono">form</span></li>
                <li class="lv1"><svg class="caret"><use href="#i-down"/></svg><svg viewBox="0 0 22 22"><path d="M1 1h20v20H1z" fill="#d9dde0" stroke="#a9d3e8" stroke-width="2"/><path d="M4 5h8v4H4zM14 5h4v4h-4zM4 13h14v4H4z" fill="#fff"/></svg><span class="mono picked">body</span></li>
                <li class="lv2"><svg viewBox="0 0 22 22"><path d="M1 5h20v13H1z" fill="#fff" stroke="#6386b8" stroke-width="1.500"/></svg><span class="mono">report0</span></li>
                <li class="lv2"><svg viewBox="0 0 22 22"><path d="M0 6h6v16H0z" fill="#b4cf4a"/><path d="M12 3h6v19h-6z" fill="#1c6fb4"/><path d="M6 0h5v22H6z" fill="#e2443c"/><path d="M11 20c0-7 4-11 9-12l1 4c-3 1-4 7-10 8z" fill="#f8c24a"/><path d="M16 8l6 0v5z" fill="#ee7a4a"/></svg><span class="mono">chart0</span></li>
            </ul>
            <div class="tabs prop-tabs" role="tablist">
                <button role="tab" aria-selected="true">属性</button>
                <button role="tab" aria-selected="false">事件</button>
                <button role="tab" aria-selected="false">移动端</button>
            </div>
            <form class="props">
                <h3>基本<svg><use href="#i-down"/></svg></h3>
                <div class="row"><label for="name">组件名称</label><input id="name" value="body"></div>
                <h3>组件区域缩放<svg><use href="#i-down"/></svg></h3>
                <div class="row"><label for="layout">布局方式</label><div class="select"><select id="layout"><option>绝对布局</option></select><svg class="chev"><use href="#i-chev"/></svg></div></div>
                <h3>高级<svg><use href="#i-down"/></svg></h3>
                <div class="row"><span>背景设置</span><div class="segment"><button type="button" class="on">跟随主题</button><button type="button">自定义</button></div></div>
                <div class="row"><label for="mark">水印</label><div class="watermark"><input id="mark"><button type="button" aria-label="编辑水印">···</button></div></div>
            </form>
        </aside>
        <div class="edge"><svg viewBox="0 0 6 20"><path d="M0 0l6 4v12l-6 4z" fill="#3f77b4"/><path d="M3 6h3v3H3zM3 11h3v3H3z" fill="#b9cde0"/></svg></div>
    </div>
</div>

</body>
</html>
```
FILE: styles.css
```css
* {
    box-sizing: border-box;
}
body {
    margin: 0;
    font: 16px/24px "Liberation Sans", "Noto Sans CJK SC", sans-serif;
    color: #111;
    background: #f4f4f7;
}
button, input, select {
    font: inherit;
    color: inherit;
}
button {
    padding: 0;
    border: 0;
    background: none;
}
ul, h2, h3 {
    margin: 0;
    padding: 0;
    font-size: 16px;
    font-weight: normal;
    list-style: none;
}
svg {
    display: block;
    flex: none;
    width: 22px;
    height: 22px;
}
.defs {
    position: absolute;
    width: 0;
    height: 0;
}
.mono {
    font-family: "Liberation Mono", monospace;
    font-size: 14px;
}
.pale { color: #c4c4c4; }
.mid { color: #909090; }
.dark { color: #444; }
.flip { transform: rotate(180deg); }
.sep {
    flex: none;
    width: 1px;
    height: 22px;
    background: #d4d4d6;
}

/* shell */
.app {
    display: flex;
    flex-direction: column;
    height: 100vh;
    overflow: hidden;
    border-top: 1px solid #39435a;
}
.menubar {
    display: flex;
    height: 31px;
    padding-right: 6px;
    background: #e0e0e2;
}
.menus {
    display: flex;
    gap: 40px;
    padding-left: 22px;
    padding-bottom: 3px;
}
.menu-tools {
    display: flex;
    align-items: center;
    gap: 11px;
    margin-left: auto;
    padding: 0 5px 2px 0;
}
.user {
    width: 139px;
    font: 14px "Liberation Mono", monospace;
    background: #b8dcf1;
}
.workspace {
    display: flex;
    flex: 1;
    min-height: 0;
}
.edge {
    display: flex;
    align-items: flex-end;
    flex: none;
    width: 6px;
    padding-bottom: 31px;
    background: #92959a;
}
.edge svg {
    width: 6px;
    height: 20px;
}
.toolbar {
    display: flex;
    flex: none;
    align-items: center;
}

/* left column */
.left {
    display: flex;
    flex-direction: column;
    flex: none;
    width: 275px;
}
.files-bar {
    gap: 13px;
    height: 32px;
    padding-top: 3px;
    border-bottom: 1px solid #d8d8da;
}
.tree li {
    display: flex;
    align-items: center;
    white-space: nowrap;
}
.files {
    flex: 1;
    padding-top: 7px;
    overflow: hidden;
}
.files li, .datasets li {
    height: 24px;
}
.tree svg {
    width: 22px;
    height: 20px;
}
.files svg, .datasets svg {
    margin-right: 5px;
}
.knob, .stub {
    flex: none;
    width: 15px;
    height: 8px;
}
.knob::before {
    content: "";
    display: block;
    width: 4px;
    height: 8px;
    background: #aaa;
    clip-path: polygon(0 0, 100% 50%, 0 100%);
}
.hscroll-thin {
    height: 14px;
    padding: 2px 0;
    background: #fff;
}
.hscroll-thin span {
    display: block;
    width: 81%;
    height: 11px;
    border-radius: 0 5px 5px 0;
    background: #e6e6e7;
}
.splitter-h {
    display: flex;
    align-items: center;
    justify-content: space-between;
    height: 14px;
    padding: 0 21px 0 9px;
    background: #e6e6e7;
}
.splitter-h svg {
    width: 13px;
    height: 8px;
}
.splitter-h i {
    width: 8px;
    height: 5px;
    border: solid #b4b4b4;
    border-width: 1px 0;
}
.data-bar {
    gap: 12px;
    height: 28px;
    border-bottom: 1px solid #d8d8da;
}
.data-bar .sep {
    margin: 0 -1px;
}
.add {
    display: flex;
    align-items: center;
}
.caret {
    width: 8px;
    height: 6px;
}
.tabs {
    display: flex;
    flex: none;
}
.tabs button {
    flex: 1;
    color: #222;
    background: #d8d9dc;
}
.tabs button[aria-selected="true"] {
    background: #f0f0f2;
}
.data-tabs {
    height: 34px;
    padding-right: 2px;
}
.data-tabs button:first-child {
    flex: 0 0 132px;
    padding-right: 15px;
}
.datasets {
    height: 440px;
}
.datasets svg {
    height: 22px;
    color: #2aa3e2;
}

.splitter-v {
    display: flex;
    flex-direction: column;
    align-items: center;
    flex: none;
    width: 14px;
    padding-top: 10px;
    background: #e6e6e7;
}
.tri-left, .tri-right {
    width: 7px;
    height: 13px;
    background: #a4a4a6;
    clip-path: polygon(100% 0, 0 50%, 100% 100%);
}
.tri-right {
    clip-path: polygon(0 0, 100% 50%, 0 100%);
}
.grip {
    width: 5px;
    height: 9px;
    margin-top: 494px;
    margin-right: 4px;
    border: solid #b4b4b4;
    border-width: 0 1px;
}

/* centre column */
.center {
    display: flex;
    flex-direction: column;
    flex: 1;
    min-width: 0;
}
.top {
    display: flex;
    height: 71px;
}
.preview {
    display: flex;
    flex-direction: column;
    align-items: center;
    gap: 7px;
    width: 71px;
    height: 64px;
    padding-top: 8px;
    padding-right: 2px;
    border-right: 1px solid #d8d8da;
}
.preview-icon {
    width: 30px;
    height: 40px;
}
.top-main {
    flex: 1;
    padding-left: 11px;
}
.main-bar {
    gap: 15px;
    height: 34px;
    padding: 0 3px 2px;
}
.main-bar .sep {
    margin: 0 -3px;
}
.text-btn {
    display: flex;
    gap: 4px;
    line-height: 22px;
}
.theme {
    margin-left: 34px;
    margin-right: 2px;
}
.doc-tabs {
    display: flex;
    height: 37px;
    background: #dfdfe1;
}
.new-tab {
    width: 36px;
    padding-left: 9px;
    border-right: 1px solid #c8c8ca;
}
.doc-tab {
    display: flex;
    align-items: center;
    gap: 6px;
    width: 326px;
    padding-left: 6px;
    color: #444;
    white-space: nowrap;
    background: #f4f4f7;
}
.close {
    margin-left: auto;
    margin-right: 4px;
}
.tab-list {
    margin-left: auto;
    margin-right: 14px;
}
.tab-list svg {
    width: 18px;
    height: 18px;
}

.ribbon {
    display: flex;
    flex: none;
    height: 83px;
    padding: 5px 0 10px;
}
.group {
    display: flex;
    flex-direction: column;
    align-items: center;
    gap: 14px;
    padding-top: 8px;
    border-right: 2px solid #e9e8e1;
}
.icons {
    display: flex;
    align-items: center;
    gap: 15px;
    height: 26px;
}
.params {
    width: 59px;
}
.blocks {
    width: 135px;
    padding-right: 2px;
}
.p-glyph {
    font: bold 16px "Liberation Serif", serif;
    fill: #333;
}
.tiny {
    font: 10px "Liberation Sans", sans-serif;
    fill: #444;
}
.marked {
    position: relative;
}
.marked::after {
    content: "";
    position: absolute;
    inset: -4px -9px;
    border: 2px solid #fd262e;
}
.wide-mark::after {
    inset: -6px -10px -5px -12px;
}
.chart-slot {
    position: relative;
    flex: none;
    width: 315px;
}
.chart-menu {
    position: absolute;
    z-index: 2;
    top: -5px;
    left: 0;
    display: flex;
    flex-direction: column;
    gap: 12px;
    width: 313px;
    height: 165px;
    padding: 24px 0 0 11px;
    border-left: 3px solid #d6d6d9;
    background: #f4f4f7;
}
.chart-row {
    display: flex;
    gap: 15px;
}
.chart-row .wide {
    padding: 0 5px;
}
.chart-row .wide svg {
    width: 26px;
}
.arrow {
    position: absolute;
    z-index: 3;
    top: 76px;
    left: 164px;
    width: 44px;
    height: 100px;
}
.widgets {
    gap: 18px;
    width: 440px;
    padding-top: 7px;
}
.widgets .icons {
    height: 22px;
}
.widgets .sep {
    margin: 0 -4px;
}
.group-foot {
    display: flex;
    align-items: center;
    width: 100%;
}
.group-foot span {
    flex: 1;
    padding-left: 6px;
    text-align: center;
}
.group-foot button {
    padding-right: 11px;
}
.chev {
    width: 14px;
    height: 10px;
}
.suite {
    gap: 18px;
    width: 82px;
    padding-top: 5px;
}

.canvas {
    display: grid;
    grid-template: 1fr 22px / 1fr 22px;
    flex: 1;
    min-height: 0;
}
.stage {
    padding: 80px 0;
    background: #fff;
}
.form-body {
    position: relative;
    height: 664px;
    margin-left: 1px;
    padding: 13px 0 0 290px;
    border: 3px solid #4c9ff8;
    outline: 1px solid #a8d2fb;
    outline-offset: -4px;
}
.chart-box {
    position: relative;
    width: 605px;
    height: 373px;
    padding: 1px 1px 1px 6px;
    border: 1px solid #c8c8ca;
    border-right-color: #eee;
    border-bottom-color: #eee;
}
.chart-box svg {
    width: 100%;
    height: 100%;
}
.land { fill: #707c86; }
.tibet { fill: #1b84cf; }
.jiangsu { fill: #86b3d6; }
.provinces path {
    stroke: #f4f6f8;
    stroke-width: 5;
}
.provinces .lines {
    fill: none;
}
.islands {
    fill: none;
    stroke: #dfe6ea;
    stroke-width: 5;
}
.rivers path {
    fill: none;
    stroke: #06304c;
    stroke-width: 4;
}
.rivers .lake {
    stroke-width: 9;
}
.foreign {
    fill: none;
    stroke: #30343e;
    stroke-width: 3;
}
.map-label {
    position: absolute;
    top: 14px;
    left: 165px;
    font-weight: bold;
    color: #8b8f94;
}
.report-box {
    width: 605px;
    height: 256px;
    margin-top: 8px;
    border: 1px solid #ececee;
}
.report-box table {
    width: 532px;
    table-layout: fixed;
    border-collapse: collapse;
    font-size: 16px;
    line-height: 20px;
    color: #333;
}
.report-box th, .report-box td {
    height: 24px;
    padding: 0;
    overflow: hidden;
    font-weight: normal;
    white-space: nowrap;
    text-align: center;
    border: 1px solid #9ccbf8;
}
.report-box th {
    background: linear-gradient(#f4f8fc, #cfe3ea);
}
.report-box td {
    padding-left: 4px;
    font-size: 15px;
    background: linear-gradient(#888, #888) 3px 2px / 1px 5px no-repeat;
}
.report-box .flag {
    background:
        linear-gradient(#888, #888) 3px 2px / 1px 5px no-repeat,
        linear-gradient(45deg, #fbbf12 5px, #fff 5px);
}
.vscroll, .hscroll {
    display: flex;
    justify-content: space-between;
    color: #bbb;
    background: #f9f9f8;
    border: 1px solid #ecebe4;
}
.vscroll {
    flex-direction: column;
}
.vscroll svg, .hscroll svg {
    width: 20px;
    height: 20px;
    padding: 3px;
    background: #ededeb;
}
.turn-l { transform: rotate(90deg); }
.turn-r { transform: rotate(-90deg); }

.status {
    display: flex;
    gap: 6px;
    flex: none;
    height: 21px;
    overflow: hidden;
    line-height: 28px;
}
.status input {
    height: 28px;
    padding: 0;
    border: 1px solid #d8d8da;
    background: #fff;
    text-align: center;
}
.form-name {
    width: 254px;
}
.size-w {
    width: 82px;
}
.size-w + span {
    margin: 0 4px 0 3px;
}
.size-h {
    width: 82px;
    margin-left: 7px;
}
.size-h + span {
    margin-left: 4px;
}
.zoom {
    display: flex;
    gap: 6px;
    margin-left: auto;
    padding-right: 4px;
}
.zoom button {
    height: 28px;
}
.zoom input[type="range"] {
    appearance: none;
    width: 293px;
    margin: 0 9px 0 0;
    border: 0;
    background: linear-gradient(#d4d4d6, #d4d4d6) 50% 50% / 1px 14px no-repeat, linear-gradient(#d4d4d6, #d4d4d6) 50% 50% / 100% 1px no-repeat;
}
.zoom input[type="range"]::-webkit-slider-thumb {
    appearance: none;
    width: 5px;
    height: 16px;
    border-radius: 2px;
    background: #333;
}
.zoom .percent {
    width: 47px;
    padding-left: 4px;
    text-align: left;
}

/* right column */
.side-strip {
    display: flex;
    flex-direction: column;
    align-items: center;
    flex: none;
    width: 56px;
    padding-top: 9px;
    background: #e7e7e8;
}
.side-strip button {
    display: flex;
    align-items: center;
    justify-content: center;
    width: 44px;
    height: 38px;
    margin-bottom: 6px;
}
.side-strip .on {
    margin-top: 17px;
    background: #f6f6f8;
}
.right {
    position: relative;
    display: flex;
    flex-direction: column;
    flex: none;
    width: 332px;
}
.panel-title {
    display: flex;
    align-items: center;
    justify-content: space-between;
    height: 36px;
    padding: 0 3px 0 12px;
    border-bottom: 1px solid #d8d8da;
}
.comp-bar {
    gap: 14px;
    height: 35px;
    margin: 0 10px 0 12px;
    padding-left: 10px;
    border-bottom: 1px solid #e2e2e4;
}
.comp-bar .sep {
    margin-left: -4px;
    margin-right: -6px;
}
.components {
    height: 249px;
    padding-top: 11px;
}
.components li {
    gap: 6px;
    height: 26px;
}
.components svg {
    height: 22px;
}
.components .caret {
    width: 12px;
    height: 8px;
}
.lv0 { padding-left: 18px; }
.lv1 { padding-left: 25px; }
.lv1 .caret { margin-right: 7px; }
.components .lv1 { gap: 3px; }
.lv2 { padding-left: 74px; }
.picked {
    padding: 3px 4px;
    line-height: 24px;
    color: #fff;
    background: #429bf9;
    border: 2px solid #fd262e;
}
.prop-tabs {
    gap: 1px;
    height: 34px;
    border-top: 1px solid #d8d9dc;
}
.props {
    display: flex;
    flex-direction: column;
    gap: 14px;
    padding: 14px 14px 0 13px;
}
.props h3 {
    display: flex;
    align-items: center;
    justify-content: space-between;
    height: 27px;
    padding: 0 7px 0 6px;
    background: #ececed;
}
.props h3 svg {
    width: 11px;
    height: 7px;
}
.row {
    display: grid;
    grid-template-columns: 101px 1fr;
    align-items: center;
    height: 27px;
    padding-left: 6px;
}
.row input {
    width: 100%;
    height: 27px;
    padding: 0 6px;
    border: 1px solid #d8d9dc;
    background: #fff;
}
.select {
    position: relative;
    margin: 0 -3px 0 -5px;
    border: 2px solid #fd262e;
}
.select select {
    display: block;
    appearance: none;
    width: 100%;
    height: 26px;
    padding: 0 10px;
    border: 0;
    border-radius: 0;
    background: linear-gradient(#d8d9dc, #d8d9dc) right / 27px 100% no-repeat #fff;
}
.select svg {
    position: absolute;
    top: 8px;
    right: 7px;
    color: #666;
}
.segment {
    display: flex;
    height: 29px;
    margin-left: -4px;
    border: 1px solid #d8d9dc;
    background: #fff;
}
.segment button {
    flex: 1;
}
.segment .on {
    color: #fff;
    background: #429bf9;
}
.watermark {
    display: flex;
}
.watermark button {
    flex: none;
    width: 28px;
    color: #888;
    background: #d8d9dc;
}
.badge {
    position: absolute;
    z-index: 4;
    width: 52px;
    height: 52px;
    border-radius: 50%;
    font-family: Roboto, sans-serif;
    font-size: 38px;
    line-height: 52px;
    text-align: center;
    color: #fff;
    background: #fd262e;
}
.badge-1 {
    top: 96px;
    left: 142px;
}
.badge-2 {
    top: 435px;
    left: 172px;
}
.badge-3 {
    top: 16px;
    left: 212px;
}
```
